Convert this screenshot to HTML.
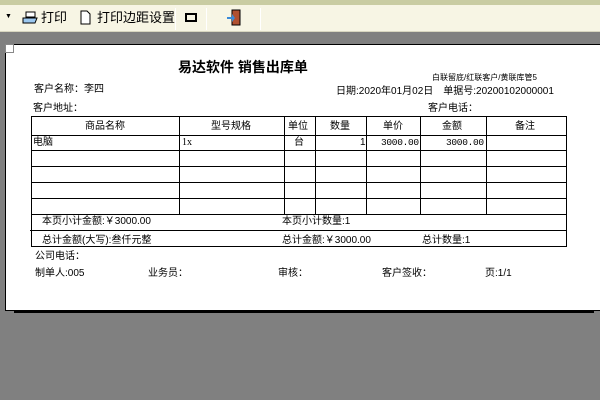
<!DOCTYPE html>
<html><head><meta charset="utf-8"><style>
*{margin:0;padding:0;box-sizing:border-box}
body{width:600px;height:400px;overflow:hidden;background:#808080;position:relative;font-family:"Liberation Sans","Noto Sans CJK SC",sans-serif;font-size:10px;color:#000}
.a{position:absolute;white-space:nowrap;line-height:12px}
.p{transform:translateY(3px)}
#top{position:absolute;left:0;top:0;width:600px;height:5px;background:#c9cca2}
#tb{position:absolute;left:0;top:5px;width:600px;height:27px;background:#f7f5e4;border-bottom:1px solid #d8d6c0}
.sep{position:absolute;top:3px;width:1px;height:22px;background:#b8b6a0;border-right:1px solid #fff}
.tt{font-size:13px;line-height:16px}
#paper{position:absolute;left:5px;top:44px;width:600px;height:267px;background:#fff;border:1px solid #000}
#sh{position:absolute;left:14px;top:311px;width:580px;height:2px;background:#000}
.h{position:absolute;height:1px;background:#000}
.v{position:absolute;width:1px;background:#000}
.m{font-family:'Liberation Mono',monospace;font-size:9.5px;letter-spacing:-0.3px}
</style></head><body>
<div id="top"></div>
<div id="tb">
<div class="a" style="left:5px;top:6px;font-size:7px">▼</div>
<svg class="a" style="left:22px;top:6px" width="16" height="14"><rect x="4" y="1" width="9" height="5" fill="#fff" stroke="#000"/><path d="M1 7h14l-2 5H1z" fill="#9cc8f0" stroke="#000"/></svg>
<div class="a tt" style="left:41px;top:5px">打印</div>
<svg class="a" style="left:80px;top:5px" width="11" height="15"><path d="M1 1h6l3 3v10H1z" fill="#fff" stroke="#000"/></svg>
<div class="a tt" style="left:97px;top:5px">打印边距设置</div>
<div class="sep" style="left:175px"></div>
<div class="a" style="left:185px;top:8px;width:12px;height:9px;border:2px solid #000"></div>
<div class="sep" style="left:206px"></div>
<svg class="a" style="left:226px;top:4px" width="16" height="18"><rect x="6" y="1" width="8" height="15" fill="#b05030" stroke="#000"/><path d="M1 8h5V5l3 4-3 4v-3H1z" fill="#3a8ad8"/></svg>
<div class="sep" style="left:260px"></div>
</div>
<div id="paper"></div>
<div id="sh"></div>
<div class="a" style="left:5px;top:44px;width:9px;height:9px;border:1px solid #888;background:#fff"></div>
<div class="a" style="left:178px;top:59px;font-size:14px;line-height:16px;font-weight:bold">易达软件 销售出库单</div>
<div class="a p" style="left:432px;top:69px;font-size:8px">白联留底/红联客户/黄联库管5</div>
<div class="a p" style="left:34px;top:81px">客户名称：李四</div>
<div class="a p" style="left:336px;top:83px">日期:2020年01月02日　单据号:20200102000001</div>
<div class="a p" style="left:33px;top:100px">客户地址：</div>
<div class="a p" style="left:428px;top:100px">客户电话：</div>
<div class="h" style="left:31px;width:536px;top:116px"></div>
<div class="h" style="left:31px;width:536px;top:135px"></div>
<div class="h" style="left:31px;width:536px;top:150px"></div>
<div class="h" style="left:31px;width:536px;top:166px"></div>
<div class="h" style="left:31px;width:536px;top:182px"></div>
<div class="h" style="left:31px;width:536px;top:198px"></div>
<div class="h" style="left:31px;width:536px;top:214px"></div>
<div class="h" style="left:30px;width:537px;top:230px"></div>
<div class="h" style="left:31px;width:536px;top:246px"></div>
<div class="v" style="left:31px;top:116px;height:130px"></div>
<div class="v" style="left:566px;top:116px;height:130px"></div>
<div class="v" style="left:179px;top:116px;height:98px"></div>
<div class="v" style="left:284px;top:116px;height:98px"></div>
<div class="v" style="left:315px;top:116px;height:98px"></div>
<div class="v" style="left:366px;top:116px;height:98px"></div>
<div class="v" style="left:420px;top:116px;height:98px"></div>
<div class="v" style="left:486px;top:116px;height:98px"></div>
<div class="a p" style="left:85px;top:118px">商品名称</div>
<div class="a p" style="left:211px;top:118px">型号规格</div>
<div class="a p" style="left:288px;top:118px">单位</div>
<div class="a p" style="left:330px;top:118px">数量</div>
<div class="a p" style="left:383px;top:118px">单价</div>
<div class="a p" style="left:442px;top:118px">金额</div>
<div class="a p" style="left:515px;top:118px">备注</div>
<div class="a p" style="left:33px;top:134px">电脑</div>
<div class="a p" style="left:182px;top:134px;font-family:'Liberation Serif',serif">1x</div>
<div class="a p" style="left:294px;top:134px">台</div>
<div class="a p" style="left:360px;top:134px">1</div>
<div class="a p m" style="left:381px;top:134px">3000.00</div>
<div class="a p m" style="left:446px;top:134px">3000.00</div>
<div class="a p" style="left:42px;top:213px">本页小计金额:￥3000.00</div>
<div class="a p" style="left:282px;top:213px">本页小计数量:1</div>
<div class="a p" style="left:42px;top:232px">总计金额(大写):叁仟元整</div>
<div class="a p" style="left:282px;top:232px">总计金额:￥3000.00</div>
<div class="a p" style="left:422px;top:232px">总计数量:1</div>
<div class="a p" style="left:35px;top:248px">公司电话：</div>
<div class="a p" style="left:35px;top:265px">制单人:005</div>
<div class="a p" style="left:148px;top:265px">业务员：</div>
<div class="a p" style="left:278px;top:265px">审核：</div>
<div class="a p" style="left:382px;top:265px">客户签收：</div>
<div class="a p" style="left:485px;top:265px">页:1/1</div>
</body></html>
